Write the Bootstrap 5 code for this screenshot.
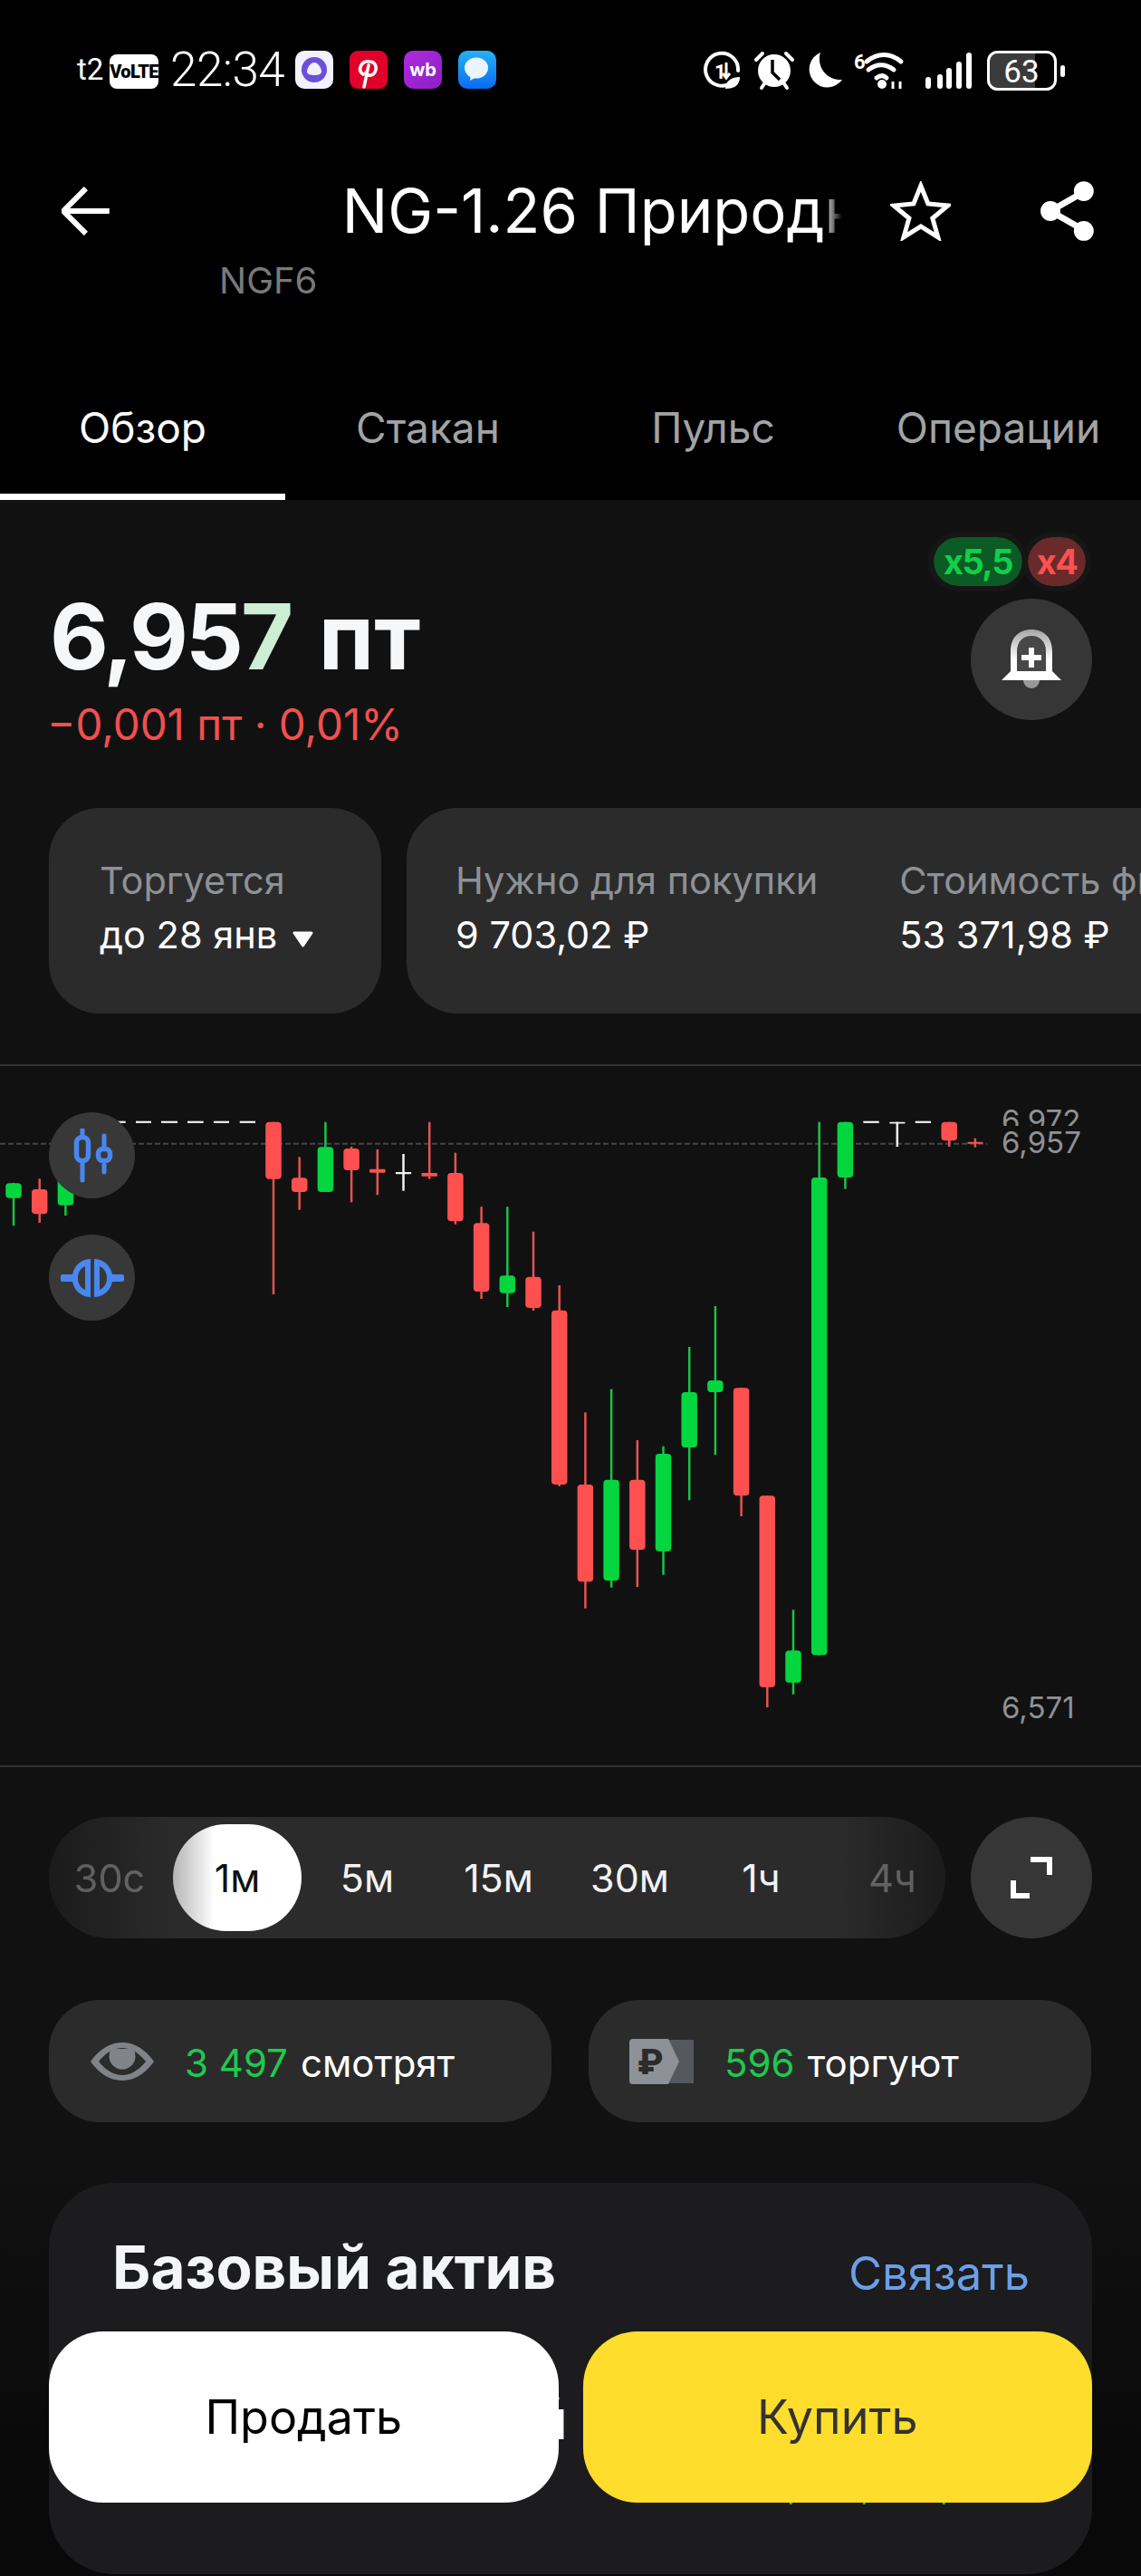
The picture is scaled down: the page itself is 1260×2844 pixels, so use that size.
<!DOCTYPE html>
<html lang="ru">
<head>
    <meta charset="UTF-8">
    <meta name="viewport" content="width=device-width, initial-scale=1.0">
    <title>NG-1.26</title>
    <link href="https://cdn.jsdelivr.net/npm/bootstrap@5.3.0/dist/css/bootstrap.min.css" rel="stylesheet">
    <style>
        body { background: #111; font-family: Inter, "Noto Sans", sans-serif; color: #fff; }
        .phone { width: 1260px; height: 2844px; overflow: hidden; background: linear-gradient(180deg, #111 84%, #090909 96%); }
        .top-area { background: #000; height: 552px; }

        .status-bar { height: 180px; padding: 56px 84px 0 85px; font-family: Roboto, sans-serif; }
        .carrier { font-size: 33px; line-height: 42px; width: 36px; }
        .volte { width: 54px; height: 38px; margin-top: 4px; border-radius: 8px; background: #fff; color: #000; font-size: 20px; font-weight: 900; letter-spacing: -.6px; }
        .clock { font-size: 53px; line-height: 42px; font-weight: 300; letter-spacing: -.5px; margin: 0 13px 0 13px; width: 125px; }
        .app-icon { width: 42px; height: 42px; margin-right: 18px; }

        .head-row { height: 106px; padding: 0 50px 0 68px; }
        .title-box { width: 554px; margin-left: 256px; overflow: hidden; white-space: nowrap; font-size: 67px; line-height: 106px; font-weight: 400;
            -webkit-mask-image: linear-gradient(90deg, #000 96%, transparent); mask-image: linear-gradient(90deg, #000 96%, transparent); }
        .star-ic { margin-left: 53px; }
        .share-ic { margin-left: 98px; }
        .ticker { height: 48px; padding-left: 242px; font-size: 40px; line-height: 48px; color: #77797c; }

        .tab-row { height: 218px; }
        .tab-item { width: 315px; height: 218px; padding-top: 108px; font-size: 46px; line-height: 60px; text-align: center; color: #a1a3a6; }
        .tab-on { color: #fff; border-bottom: 7px solid #fff; }

        .quote-block { height: 340px; padding: 41px 54px 0 55px; }
        .price { font-size: 100px; line-height: 120px; font-weight: 700; letter-spacing: -3px; margin-top: 50px; color: #f6f7f8; }
        .price-last { color: #cdeed5; }
        .price-unit { margin-left: 10px; letter-spacing: 0; }
        .price-diff { font-size: 47.500px; line-height: 60px; color: #f0504f; margin: 7px 0 0 -3px; }
        .lev { height: 54px; border-radius: 27px; font-size: 38px; font-weight: 700; letter-spacing: -1.500px; line-height: 54px; text-align: center; outline: 6px solid #161616; }
        .lev-up { width: 98px; background: #0c5a25; color: #0fd148; }
        .lev-down { width: 64px; background: #6a2a2a; color: #ff5050; }
        .lev-wrap { gap: 6px; margin-right: 7px; }
        .round-btn { width: 134px; height: 134px; border-radius: 50%; background: #363636; }
        .bell-btn { margin-top: 14px; }

        .info-row { gap: 28px; padding-left: 54px; height: 227px; overflow: hidden; }
        .info-card { background: #2b2b2b; border-radius: 56px; flex-shrink: 0; padding-top: 52px; height: 227px; font-size: 41.500px; line-height: 57px; white-space: nowrap; }
        .info-first { width: 367px; padding-left: 56px; }
        .info-second { width: 900px; padding-left: 54px; }
        .muted-label { color: #8e9196; margin-bottom: 3px; }
        .info-divider { width: 2px; height: 118px; margin: -5px 45px 0; background: #4a4a4a; }
        .tri-ic { margin-left: 16px; vertical-align: 1px; }

        .chart-wrap { margin-top: 56px; height: 776px; border-top: 2px solid #333; border-bottom: 2px solid #333; }
        .chart-svg { display: block; width: 1260px; height: 772px; }
        .axis-label { font-size: 33px; fill: #8f9193; }
        .chart-btn { left: 54px; width: 95px; height: 95px; border-radius: 50%; background: #383838; }
        .chart-btn-a { top: 51px; }
        .chart-btn-b { top: 186px; }

        .frames-row { gap: 28px; padding: 0 54px; margin-top: 55px; }
        .frames { width: 990px; height: 134px; border-radius: 67px; overflow: hidden;
            background: linear-gradient(90deg, #1b1b1b, #2b2b2b 14%, #2b2b2b 88%, #1b1b1b); }
        .frame-item { width: 145px; height: 118px; flex-shrink: 0; line-height: 118px; text-align: center; font-size: 43px; color: #f2f2f2; }
        .frame-first { width: 134px; margin-right: 3px; }
        .frame-dim { opacity: .3; }
        .frame-on { width: 142px; color: #111; border-radius: 59px; background: linear-gradient(90deg, #b5b5b5, #fff 32%); }

        .stat-row { gap: 41px; padding: 0 54px; margin-top: 68px; }
        .stat-pill { width: 555px; height: 135px; border-radius: 56px; background: #2b2b2b; padding-left: 44px; font-size: 42px; }
        .stat-num { color: #1fc94f; margin-right: 14px; padding-top: 3px; }
        .stat-label { padding-top: 3px; }
        .stat-icon { margin-right: 32px; }

        .asset-card { position: relative; margin: 67px 54px 0; height: 432px; border-radius: 72px; background: #1c1c1e; padding: 62px 69px 0 70px; overflow: hidden; }
        .asset-title { font-size: 65.500px; line-height: 64px; font-weight: 700; color: #f4f5f8; }
        .asset-link { font-size: 50.700px; line-height: 64px; margin-top: 6px; color: #6b9fe8; }
        .asset-name { width: 502px; margin-top: 98px; text-align: right; font-size: 60px; line-height: 62px; font-weight: 700; }
        .asset-vals { margin: 18px 0 0 729px; font-size: 40px; line-height: 48px; color: #1fc94f; white-space: nowrap; }
        .asset-vals span { display: inline-block; }
        .val-a { width: 81px; }
        .val-b { width: 88px; }

        .trade-bar { left: 54px; right: 54px; bottom: 81px; gap: 27px; }
        .trade-btn { flex: 1 1 0; height: 189px; border: 0; border-radius: 60px; font-size: 52px; }
        .sell-btn, .sell-btn:hover { background: #fff; color: #000; }
        .buy-btn, .buy-btn:hover { background: #ffdd2d; color: #333; }
    </style>
</head>
<body>
    <div class="phone position-relative">
        <div class="top-area">
            <div class="status-bar d-flex justify-content-between align-items-start">
                <div class="d-flex align-items-start">
                    <span class="carrier">t2</span>
                    <span class="volte d-inline-flex align-items-center justify-content-center">VoLTE</span>
                    <span class="clock">22:34</span>
                    <svg class="app-icon" viewBox="0 0 42 42"><rect width="42" height="42" rx="10" fill="#f3f1fb"/><circle cx="21" cy="21" r="14" fill="#6c50d9"/><path d="M21 13c-4 0-8 6-8 10 0 3 4 4 8 4s8-1 8-4c0-4-4-10-8-10z" fill="#f3f1fb"/></svg>
                    <svg class="app-icon" viewBox="0 0 42 42"><rect width="42" height="42" rx="9" fill="#e0002a"/><path d="M15 26c-3-2-4-5-3-8 1-4 5-7 10-6 5 0 8 4 7 9-1 4-4 7-8 6-2-1-3-2-3-3M21 16l-5 24" fill="none" stroke="#fff" stroke-width="3.6" stroke-linecap="round"/></svg>
                    <svg class="app-icon" viewBox="0 0 42 42"><defs><linearGradient id="wbGrad" x1="0" y1="0" x2="1" y2="1"><stop offset="0" stop-color="#b02be0"/><stop offset="1" stop-color="#8a1fc4"/></linearGradient></defs><rect width="42" height="42" rx="10" fill="url(#wbGrad)"/><text x="21" y="28" text-anchor="middle" font-family="Inter, sans-serif" font-size="20" font-weight="700" fill="#fff">wb</text></svg>
                    <svg class="app-icon" viewBox="0 0 42 42"><defs><linearGradient id="msgGrad" x1="0" y1="0" x2="0" y2="1"><stop offset="0" stop-color="#25b0f8"/><stop offset="1" stop-color="#0a6cf0"/></linearGradient></defs><rect width="42" height="42" rx="10" fill="url(#msgGrad)"/><ellipse cx="20" cy="19" rx="13" ry="11.5" fill="#eaf5fd"/><path d="M14 26l-1 7 9-5z" fill="#eaf5fd"/></svg>
                </div>
                <div class="d-flex align-items-start">
                    <svg width="400" height="44" viewBox="776 56 400 44">
                        <!-- data saver -->
                        <path d="M808 91a18 18 0 1 1 7-13" fill="none" stroke="#fff" stroke-width="4" stroke-linecap="round"/>
                        <text x="789" y="87" font-family="Roboto, sans-serif" font-size="22" font-weight="700" fill="#fff">1</text>
                        <path d="M802 69v17m-4-5l4 5 4-5" fill="none" stroke="#fff" stroke-width="3"/>
                        <path d="M801 98c0-9 7-13 16-13 0 9-6 13-16 13z" fill="#fff"/>
                        <!-- alarm -->
                        <circle cx="855" cy="78" r="18" fill="#fff"/>
                        <path d="M853 66v14l8 8" fill="none" stroke="#000" stroke-width="3.5"/>
                        <path d="M835 66l7-7M875 66l-7-7M841 97l4-6M869 97l-4-6" stroke="#fff" stroke-width="4" stroke-linecap="round"/>
                        <!-- moon -->
                        <path d="M906 58a20 20 0 1 0 24 30 23 23 0 0 1-24-30z" fill="#fff"/>
                        <!-- wifi -->
                        <text x="943" y="76" font-family="Roboto, sans-serif" font-size="22" font-weight="700" fill="#fff">6</text>
                        <path d="M957 68c12-10 26-10 38 0M959 77c9-7 19-7 28 0M968 86c4-3 8-3 11 0" fill="none" stroke="#fff" stroke-width="5" stroke-linecap="round"/>
                        <circle cx="974" cy="93" r="5" fill="#fff"/>
                        <path d="M986 90v8M994 90v8" stroke="#fff" stroke-width="3"/>
                        <!-- signal -->
                        <rect x="1022" y="85" width="6" height="13" rx="3" fill="#fff"/>
                        <rect x="1035" y="82" width="6" height="16" rx="3" fill="#fff"/>
                        <rect x="1045" y="75" width="6" height="23" rx="3" fill="#fff"/>
                        <rect x="1056" y="68" width="6" height="30" rx="3" fill="#fff"/>
                        <rect x="1067" y="58" width="6" height="40" rx="3" fill="#fff"/>
                        <!-- battery -->
                        <path d="M1101 58h42v40h-42a9 9 0 0 1-9-9v-22a9 9 0 0 1 9-9z" fill="#3b3b3b"/>
                        <rect x="1091.500" y="57.500" width="74" height="41" rx="10" fill="none" stroke="#fff" stroke-width="3"/>
                        <text x="1128" y="91" text-anchor="middle" font-family="Roboto, sans-serif" font-size="35" fill="#fff">63</text>
                        <rect x="1171" y="72" width="5" height="13" rx="2.500" fill="#fff"/>
                    </svg>
                </div>
            </div>

            <div class="head-row d-flex align-items-center">
                <svg width="54" height="54" viewBox="0 0 54 54"><path d="M3 27h50M27 2L2 27l25 25" fill="none" stroke="#fff" stroke-width="6"/></svg>
                <div class="title-box">NG-1.26 Природный газ</div>
                <svg class="star-ic" width="68" height="66" viewBox="0 0 68 66"><path d="M34 5l8 20 22 2-17 14 6 21-19-12-19 12 6-21L4 27l22-2z" fill="none" stroke="#fff" stroke-width="5" stroke-linejoin="miter"/></svg>
                <svg class="share-ic" width="62" height="68" viewBox="0 0 62 68"><path d="M49 13L12 34l37 21" fill="none" stroke="#fff" stroke-width="7"/><circle cx="49" cy="12" r="11" fill="#fff"/><circle cx="12" cy="34" r="11" fill="#fff"/><circle cx="49" cy="56" r="11" fill="#fff"/></svg>
            </div>
            <div class="ticker">NGF6</div>

            <div class="tab-row d-flex">
                <div class="tab-item tab-on">Обзор</div>
                <div class="tab-item">Стакан</div>
                <div class="tab-item">Пульс</div>
                <div class="tab-item">Операции</div>
            </div>
        </div>

        <div class="quote-block d-flex justify-content-between">
            <div>
                <div class="price">6,95<span class="price-last">7</span> <span class="price-unit">пт</span></div>
                <div class="price-diff">−0,001 пт · 0,01%</div>
            </div>
            <div class="d-flex flex-column align-items-end">
                <div class="lev-wrap d-flex">
                    <div class="lev lev-up">x5,5</div>
                    <div class="lev lev-down">x4</div>
                </div>
                <div class="round-btn bell-btn d-flex align-items-center justify-content-center">
                    <svg width="68" height="66" viewBox="0 0 68 66"><defs><linearGradient id="bellGrad" x1="0" y1="0" x2="0" y2="1"><stop offset="0" stop-color="#a5a5a5"/><stop offset=".6" stop-color="#fff"/></linearGradient></defs><path d="M34 0C20 0 11 9 11 24v22L1 56h66L57 46V24C57 9 48 0 34 0z" fill="url(#bellGrad)"/><path d="M34 7C25 7 18 13 18 24v22h32V24C50 13 43 7 34 7z" fill="#484848"/><path d="M34 20v22M23 31h22" stroke="#fff" stroke-width="6"/><path d="M25 56a9 9 0 0 0 18 0z" fill="#999"/></svg>
                </div>
            </div>
        </div>

        <div class="info-row d-flex">
            <div class="info-card info-first">
                <div class="muted-label">Торгуется</div>
                <div>до 28 янв<svg class="tri-ic" width="25" height="19" viewBox="0 0 25 19"><path d="M3 3h19l-9.500 14z" fill="#fff" stroke="#fff" stroke-width="3" stroke-linejoin="round"/></svg></div>
            </div>
            <div class="info-card info-second d-flex">
                <div>
                    <div class="muted-label">Нужно для покупки</div>
                    <div>9 703,02 ₽</div>
                </div>
                <div class="info-divider"></div>
                <div>
                    <div class="muted-label">Стоимость фьючерса</div>
                    <div>53 371,98 ₽</div>
                </div>
            </div>
        </div>

        <div class="chart-wrap position-relative">
            <svg class="chart-svg" id="chart" viewBox="0 1177 1260 772">
                <defs><clipPath id="axisClip"><rect x="1090" y="1200" width="140" height="43"/></clipPath></defs>
                <line x1="0" y1="1262.700" x2="1090" y2="1262.700" stroke="#454545" stroke-width="2" stroke-dasharray="6 3"/>
                <g id="candles"></g>
                <text class="axis-label" x="1106" y="1249" clip-path="url(#axisClip)">6,972</text>
                <text class="axis-label" x="1106" y="1273">6,957</text>
                <text class="axis-label" x="1106" y="1897">6,571</text>
            </svg>
            <div class="chart-btn chart-btn-a position-absolute d-flex align-items-center justify-content-center">
                <svg width="48" height="60" viewBox="0 0 48 60" fill="none" stroke="#4a86f0"><path d="M13 1v8M13 36v21M37 8v14M37 40v8" stroke-width="5" stroke-linecap="round"/><rect x="6.500" y="9.500" width="13" height="26" rx="6" stroke-width="5.500"/><rect x="30.500" y="22.500" width="13" height="13" rx="5" stroke-width="5.500"/></svg>
            </div>
            <div class="chart-btn chart-btn-b position-absolute d-flex align-items-center justify-content-center">
                <svg width="70" height="44" viewBox="0 0 70 44"><path fill="#4a86f0" fill-rule="evenodd" d="M33 1v42C23 43 15 36 13 26H3a4 4 0 0 1 0-8h10C15 8 23 1 33 1zM27 9c-5 2-8 7-8 13s3 11 8 13z"/><path fill="#4a86f0" fill-rule="evenodd" d="M37 1v42c10 0 18-7 20-17h10a4 4 0 0 0 0-8H57C55 8 47 1 37 1zM43 9c5 2 8 7 8 13s-3 11-8 13z"/></svg>
            </div>
        </div>

        <div class="frames-row d-flex">
            <div class="frames d-flex align-items-center">
                <div class="frame-item frame-first frame-dim">30с</div>
                <div class="frame-item frame-on">1м</div>
                <div class="frame-item">5м</div>
                <div class="frame-item">15м</div>
                <div class="frame-item">30м</div>
                <div class="frame-item">1ч</div>
                <div class="frame-item frame-dim">4ч</div>
            </div>
            <div class="round-btn d-flex align-items-center justify-content-center">
                <svg width="46" height="46" viewBox="0 0 46 46" fill="none" stroke="#fff" stroke-width="6"><path d="M22 3h21v17"/><path d="M3 26v17h18"/></svg>
            </div>
        </div>

        <div class="stat-row d-flex">
            <div class="stat-pill d-flex align-items-center">
                <svg class="stat-icon" width="74" height="46" viewBox="0 0 74 46"><path d="M2 23C12 9 24 2 37 2s25 7 35 21C62 37 50 44 37 44S12 37 2 23zM11 23c8 10 17 15 26 15s18-5 26-15C55 13 46 8 37 8S19 13 11 23z" fill="#808488" fill-rule="evenodd"/><path d="M25 9a14.500 14.500 0 1 0 24 0z" fill="#808488"/></svg>
                <span class="stat-num">3 497</span><span class="stat-label">смотрят</span>
            </div>
            <div class="stat-pill d-flex align-items-center">
                <svg class="stat-icon" width="74" height="52" viewBox="0 0 74 52"><path d="M20 2h52v48H20z" fill="#55585c"/><path d="M5 1h39l12 25-12 25H5a4 4 0 0 1-4-4V5a4 4 0 0 1 4-4z" fill="#8e9297"/><text x="24" y="40" text-anchor="middle" font-family="Inter, 'DejaVu Sans', sans-serif" font-size="38" font-weight="800" fill="#2b2b2b">₽</text></svg>
                <span class="stat-num">596</span><span class="stat-label">торгуют</span>
            </div>
        </div>

        <div class="asset-card">
            <div class="d-flex justify-content-between align-items-start">
                <div class="asset-title">Базовый актив</div>
                <div class="asset-link">Связать</div>
            </div>
            <div class="asset-name">Природный</div>
            <div class="asset-vals"><span class="val-a">1,2</span><span class="val-b">1,2</span><span>1,2</span></div>
        </div>

        <div class="trade-bar position-absolute d-flex">
            <button class="btn trade-btn sell-btn">Продать</button>
            <button class="btn trade-btn buy-btn">Купить</button>
        </div>
    </div>

    <script src="https://cdn.jsdelivr.net/npm/bootstrap@5.3.0/dist/js/bootstrap.bundle.min.js"></script>
    <script>
        // [index, colour, wick top, body top, body bottom, wick bottom]
        const candleData = [
            [0, "g", 1306, 1306.300, 1322.700, 1353.300],
            [1, "r", 1301.300, 1313, 1340.300, 1350],
            [2, "g", 1300, 1300, 1330.700, 1342],
            [10, "r", 1238.700, 1238.700, 1301.700, 1429],
            [11, "r", 1277.300, 1300.300, 1316, 1335.700],
            [12, "g", 1238.700, 1266.300, 1316, 1316],
            [13, "r", 1266, 1268, 1292, 1327.300],
            [14, "r", 1269, 1290.700, 1294.700, 1319.300],
            [15, "w", 1274, 1294, 1296.300, 1314.700],
            [16, "r", 1238.700, 1295, 1298.700, 1301.700],
            [17, "r", 1272.700, 1295, 1348.300, 1351.700],
            [18, "r", 1332.300, 1350.300, 1426, 1434],
            [19, "g", 1332.300, 1408.300, 1427.700, 1443],
            [20, "r", 1359.700, 1409.700, 1444, 1447],
            [21, "r", 1419, 1446.700, 1639, 1641],
            [22, "r", 1559.300, 1639, 1746.300, 1775.700],
            [23, "g", 1533.700, 1633.700, 1745, 1752.700],
            [24, "r", 1590, 1633.700, 1711, 1752],
            [25, "g", 1596.700, 1605, 1712.700, 1738.700],
            [26, "g", 1487, 1537, 1598, 1656.300],
            [27, "g", 1442, 1524, 1537, 1606.300],
            [28, "r", 1532.300, 1532.300, 1651.300, 1674],
            [29, "r", 1651.300, 1651.300, 1862.700, 1885],
            [30, "g", 1777.300, 1822.300, 1857.700, 1870.700],
            [31, "g", 1238.700, 1300, 1827.300, 1827.300],
            [32, "g", 1238.700, 1238.700, 1300, 1312.700],
            [34, "w", 1238.700, 1238.700, 1240.500, 1266],
            [36, "r", 1238.700, 1238.700, 1259.300, 1266],
            [37, "r", 1256.700, 1260.700, 1262.700, 1266.700]
        ];
        const bodyColors = { g: "#03d63f", r: "#ff5050", w: "#f2f2f2" };
        const wickColors = { g: "#1dc149", r: "#e85252", w: "#f2f2f2" };
        const dashes = [[130, 8.700], [150, 17], [178, 18], [207, 17.700], [236, 17], [264.700, 17.300], [953.300, 17.400], [1010.700, 17.300]];

        const NS = "http://www.w3.org/2000/svg";
        const candles = document.getElementById("candles");

        function addRect(x, y, w, h, rx, fill) {
            let r = document.createElementNS(NS, "rect");
            r.setAttribute("x", x);
            r.setAttribute("y", y);
            r.setAttribute("width", w);
            r.setAttribute("height", h);
            r.setAttribute("rx", rx);
            r.setAttribute("fill", fill);
            candles.appendChild(r);
        }

        candleData.forEach(([i, c, wt, bt, bb, wb]) => {
            let cx = 15 + 28.7 * i;
            addRect(cx - 1.25, wt, 2.5, wb - wt, 0, wickColors[c]);
            let thin = bb - bt < 5;
            addRect(cx - 8.75, bt, 17.5, bb - bt, thin ? 1 : 4, bodyColors[c]);
        });
        dashes.forEach(([x, w]) => addRect(x, 1237.700, w, 2.200, 0, "#f2f2f2"));
    </script>
</body>
</html>
